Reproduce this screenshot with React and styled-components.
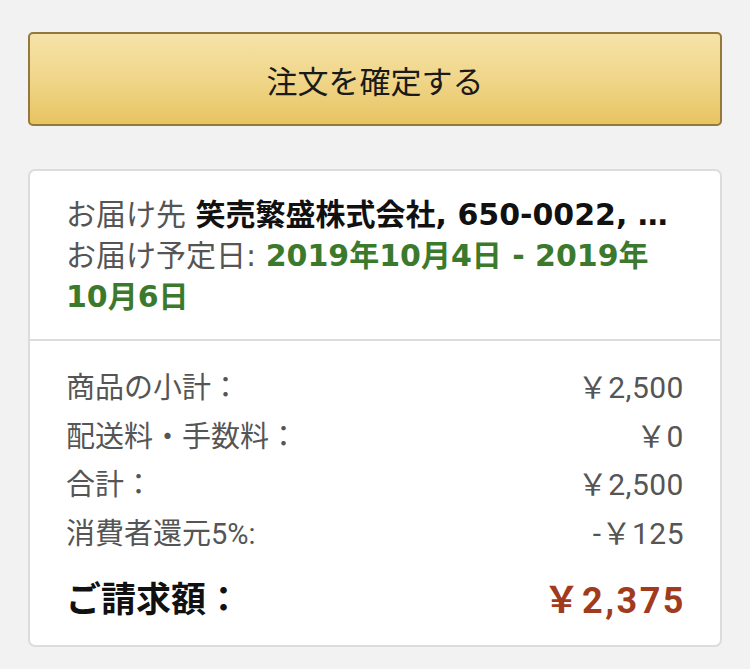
import React from 'react';
import styled, { createGlobalStyle } from 'styled-components';

const GlobalStyle = createGlobalStyle`
    html, body {
        margin: 0;
        padding: 0;
        background: #f2f2f2;
        font-family: Roboto, "Noto Sans CJK JP", sans-serif;
    }
`;

const Page = styled.div`
    width: 750px;
    height: 669px;
    box-sizing: border-box;
    padding: 32px 28px 0 28px;
    display: flex;
    flex-direction: column;
    gap: 43px;
`;

const ConfirmBtn = styled.button`
    height: 94px;
    width: 100%;
    box-sizing: border-box;
    border: 2px solid #95783d;
    border-radius: 5px;
    background: linear-gradient(to bottom, #f6e3a8 0%, #f0d68a 50%, #e8c462 100%);
    font-family: Roboto, "Noto Sans CJK JP", sans-serif;
    font-size: 31px;
    color: #1a1a1a;
    cursor: pointer;
`;

const Card = styled.div`
    background: #fff;
    border: 2px solid #dcdcdc;
    border-radius: 7px;
    overflow: hidden;
`;

const Section = styled.div`
    padding: ${props => props.$pad};
    border-top: ${props => (props.$divider ? '2px solid #dcdcdc' : 'none')};
`;

const Line = styled.div`
    font-family: "DejaVu Sans", "Noto Sans CJK JP", sans-serif;
    font-size: 30px;
    line-height: 41px;
    color: #555;
    white-space: ${props => (props.$clip ? 'nowrap' : 'normal')};
    overflow: hidden;
    text-overflow: ellipsis;
`;

const Strong = styled.span`
    font-weight: 700;
    color: ${props => props.$color || '#111'};
`;

const Keep = styled.span`
    white-space: nowrap;
`;

const Row = styled.div`
    display: flex;
    justify-content: space-between;
    align-items: center;
    font-size: ${props => (props.$total ? '35px' : '29px')};
    font-weight: ${props => (props.$total ? 700 : 400)};
    line-height: 48.5px;
    color: ${props => (props.$total ? '#111' : '#555')};
    margin-top: ${props => (props.$total ? '19px' : '0')};
`;

const Amount = styled.span`
    font-size: ${props => (props.$total ? '36px' : '30px')};
    letter-spacing: ${props => (props.$total ? '2.5px' : '0.5px')};
    margin-right: ${props => (props.$total ? '-2px' : '0')};
    color: ${props => props.$color || 'inherit'};
`;

const rows = [
    ['商品の小計：', '￥2,500'],
    ['配送料・手数料：', '￥0'],
    ['合計：', '￥2,500'],
    ['消費者還元5%:', '-￥125'],
];

const App = () => (
    <>
        <GlobalStyle />
        <Page>
            <ConfirmBtn>注文を確定する</ConfirmBtn>
            <Card>
                <Section $pad="23px 36px 22px 36px">
                    <Line $clip>
                        お届け先 <Strong>笑売繁盛株式会社, 650-0022, …</Strong>
                    </Line>
                    <Line>
                        お届け予定日: <Strong $color="#3b7a2c">2019年10月4日 - 2019年<Keep>10月6日</Keep></Strong>
                    </Line>
                </Section>
                <Section $divider $pad="23px 36px 19px 36px">
                    {rows.map(([label, value]) => (
                        <Row key={label}>
                            <span>{label}</span>
                            <Amount>{value}</Amount>
                        </Row>
                    ))}
                    <Row $total>
                        <span>ご請求額：</span>
                        <Amount $total $color="#a13b1e">￥2,375</Amount>
                    </Row>
                </Section>
            </Card>
        </Page>
    </>
);

export default App;
